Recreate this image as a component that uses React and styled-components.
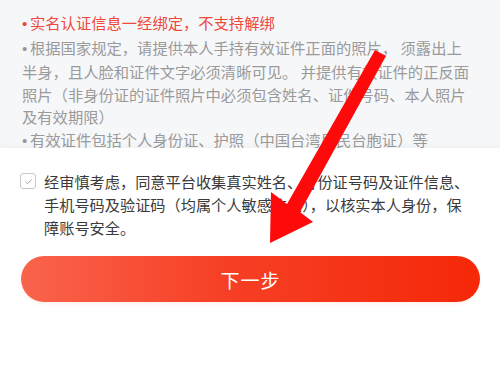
import React from "react";
import styled, { createGlobalStyle } from "styled-components";

const GlobalStyle = createGlobalStyle`
  html, body {
    margin: 0;
    padding: 0;
    background: #fff;
  }
  body {
    font-family: "Noto Sans CJK SC", "Noto Sans", sans-serif;
  }
`;

const Page = styled.div`
  position: relative;
  width: 500px;
  height: 373px;
  overflow: hidden;
  background: #fff;
  display: flex;
  flex-direction: column;
`;

const Notice = styled.div`
  height: 148px;
  box-sizing: border-box;
  padding: 11px 22px 0 22px;
  background: #f6f7f9;
`;

const NoticeLine = styled.div`
  font-size: 15.3px;
  line-height: 22.5px;
  color: ${(p) => (p.$alert ? "#f0473b" : "#9a9a9a")};
  white-space: nowrap;
`;

const Bullet = styled.span`
  display: inline-block;
  width: 8px;
  font-family: "Liberation Sans", sans-serif;
`;

const Sheet = styled.div`
  flex: 1;
  padding: 22px 20px 0 20px;
  display: flex;
  flex-direction: column;
  gap: 17px;
  box-shadow: 0 -2px 6px rgba(0, 0, 0, 0.03);
`;

const AgreeRow = styled.div`
  display: flex;
  align-items: flex-start;
  gap: 8px;
`;

const CheckBox = styled.span`
  flex: none;
  width: 14px;
  height: 14px;
  margin-top: 3px;
  border: 1px solid #c8c8c8;
  border-radius: 3px;
  display: flex;
  align-items: center;
  justify-content: center;
`;

const AgreeText = styled.div`
  font-size: 15.2px;
  line-height: 23px;
  color: #3a3a3a;
  white-space: nowrap;
`;

const NextButton = styled.button`
  height: 46px;
  width: 459px;
  margin-left: 1px;
  border: none;
  border-radius: 23px;
  background: linear-gradient(90deg, #f9644c 0%, #f63f25 45%, #f52808 100%);
  color: #fff;
  font-family: "Noto Sans CJK SC", sans-serif;
  font-size: 19px;
  letter-spacing: 1px;
  box-shadow: 0 2px 4px rgba(245, 60, 30, 0.08);
`;

const ArrowOverlay = styled.svg`
  position: absolute;
  left: 0;
  top: 0;
  pointer-events: none;
`;

export default function App() {
  return (
    <Page>
      <GlobalStyle />
      <Notice>
        <NoticeLine $alert>
          <Bullet>•</Bullet>实名认证信息一经绑定，不支持解绑
        </NoticeLine>
        <NoticeLine>
          <Bullet>•</Bullet>根据国家规定，请提供本人手持有效证件正面的照片， 须露出上
        </NoticeLine>
        <NoticeLine>半身，且人脸和证件文字必须清晰可见。 并提供有效证件的正反面</NoticeLine>
        <NoticeLine>照片（非身份证的证件照片中必须包含姓名、证件号码、本人照片</NoticeLine>
        <NoticeLine>及有效期限）</NoticeLine>
        <NoticeLine>
          <Bullet>•</Bullet>有效证件包括个人身份证、护照（中国台湾居民台胞证）等
        </NoticeLine>
      </Notice>
      <Sheet>
        <AgreeRow>
          <CheckBox>
            <svg width="9" height="9" viewBox="0 0 10 10">
              <path d="M1.5 5.2 L4 7.5 L8.5 2.5" fill="none" stroke="#a8a8a8" strokeWidth="1.1" />
            </svg>
          </CheckBox>
          <AgreeText>
            经审慎考虑，同意平台收集真实姓名、身份证号码及证件信息、
            <br />
            手机号码及验证码（均属个人敏感信息），以核实本人身份，保
            <br />
            障账号安全。
          </AgreeText>
        </AgreeRow>
        <NextButton>下一步</NextButton>
      </Sheet>
      <ArrowOverlay width="500" height="373" viewBox="0 0 500 373">
        <polygon
          points="375,50 386,56 300,212 313,222 270,243 271,192 287,204"
          fill="#ff0a0a"
        />
      </ArrowOverlay>
    </Page>
  );
}
